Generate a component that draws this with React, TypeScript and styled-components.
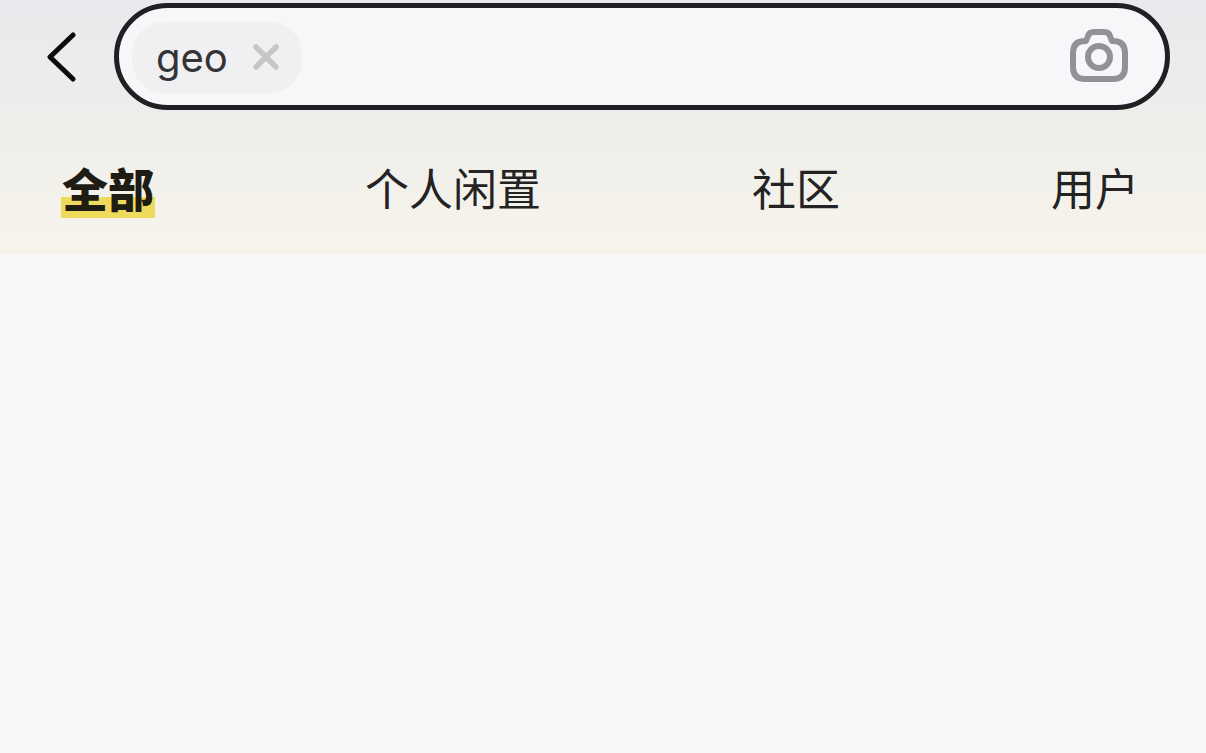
import styled, { createGlobalStyle } from 'styled-components';

const TABS = ['全部', '个人闲置', '社区', '用户'];

const GlobalStyle = createGlobalStyle`
  html, body {
    margin: 0;
    padding: 0;
    background: #f8f8f8;
  }
`;

const Page = styled.div`
  width: 1206px;
  height: 753px;
  overflow: hidden;
  background: #f8f8f8;
  font-family: "Inter", "Noto Sans CJK SC", sans-serif;
`;

const Header = styled.header`
  height: 254px;
  box-sizing: border-box;
  padding: 3px 36px 0 46px;
  background: linear-gradient(180deg, #e9e9ed 0%, #efeeeb 52%, #f7f4eb 100%);
`;

const SearchRow = styled.div`
  display: flex;
  align-items: center;
  gap: 36px;
`;

const BackButton = styled.button`
  display: flex;
  flex: none;
  width: 32px;
  margin-top: 1px;
  padding: 0;
  border: 0;
  background: none;
  color: #0c0c0e;
`;

const SearchBox = styled.div`
  flex: 1;
  height: 107px;
  box-sizing: border-box;
  display: flex;
  align-items: center;
  justify-content: space-between;
  padding: 2px 37px 0 13px;
  border: 5.5px solid #1f1f24;
  border-radius: 54px;
  background: #f7f7fa;
`;

const Chip = styled.div`
  display: flex;
  align-items: center;
  gap: 25px;
  width: 170px;
  height: 71px;
  box-sizing: border-box;
  padding: 0 22px 0 24px;
  border-radius: 32px;
  background: #f0f0f3;
  font-size: 40px;
  color: #333338;
`;

const ChipClose = styled.svg`
  flex: none;
  width: 26px;
  height: 26px;
  margin-top: -2px;
  color: #c6c6c9;
`;

const CameraIcon = styled.svg`
  flex: none;
  width: 58px;
  height: 53px;
  margin-top: -4px;
  color: #929296;
`;

const TabRow = styled.nav`
  display: flex;
  justify-content: space-between;
  margin-top: 51px;
  padding: 0 31px 0 16px;
`;

const Tab = styled.span<{ $active?: boolean }>`
  position: relative;
  z-index: 0;
  font-size: 44px;
  line-height: 58px;
  font-weight: ${(p) => (p.$active ? 900 : 400)};
  color: #232323;

  ${(p) =>
    p.$active &&
    `
    font-size: 46px;
    color: #1f1c14;

    &::after {
      content: '';
      position: absolute;
      z-index: -1;
      left: -1px;
      right: -1px;
      bottom: 1px;
      height: 21px;
      background: #eedb5c;
    }
  `}
`;

export default function App() {
  return (
    <Page>
      <GlobalStyle />
      <Header>
        <SearchRow>
          <BackButton aria-label="返回">
            <svg width="32" height="50" viewBox="0 0 32 50" fill="none">
              <path
                d="M27 3 L4 25 L27 47"
                stroke="currentColor"
                strokeWidth="5"
                strokeLinecap="round"
                strokeLinejoin="round"
              />
            </svg>
          </BackButton>
          <SearchBox>
            <Chip>
              geo
              <ChipClose viewBox="0 0 26 26" fill="none">
                <path
                  d="M3 3 L23 23 M23 3 L3 23"
                  stroke="currentColor"
                  strokeWidth="5.5"
                  strokeLinecap="round"
                />
              </ChipClose>
            </Chip>
            <CameraIcon viewBox="0 0 58 53" fill="none" stroke="currentColor" strokeWidth="6">
              <path
                d="M16 12 L18 7 Q19 3 24 3 H34 Q39 3 40 7 L42 12 H43 Q55 12 55 24 V38 Q55 50 43 50 H15 Q3 50 3 38 V24 Q3 12 15 12 Z"
                strokeLinejoin="round"
              />
              <circle cx="29" cy="28" r="11" />
            </CameraIcon>
          </SearchBox>
        </SearchRow>
        <TabRow>
          {TABS.map((tab, i) => (
            <Tab key={tab} $active={i === 0}>
              {tab}
            </Tab>
          ))}
        </TabRow>
      </Header>
    </Page>
  );
}
